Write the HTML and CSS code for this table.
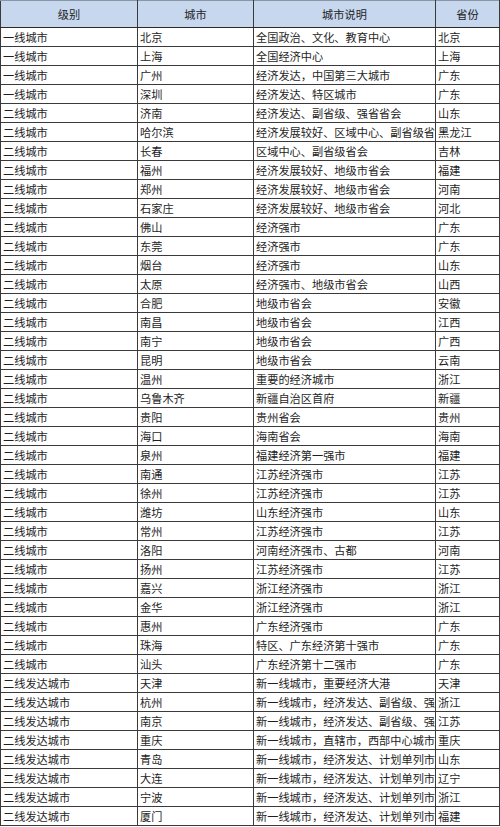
FILE: index.html
```html
<!DOCTYPE html>
<html lang="zh">
<head>
<meta charset="utf-8">
<link rel="stylesheet" href="styles.css">
</head>
<body>
<table class="sheet">
<colgroup><col class="c1"><col class="c2"><col class="c3"><col class="c4"></colgroup>
<thead>
<tr><th>级别</th><th>城市</th><th>城市说明</th><th>省份</th></tr>
</thead>
<tbody>
<tr><td>一线城市</td><td>北京</td><td><div class="clip">全国政治、文化、教育中心</div></td><td>北京</td></tr>
<tr><td>一线城市</td><td>上海</td><td><div class="clip">全国经济中心</div></td><td>上海</td></tr>
<tr><td>一线城市</td><td>广州</td><td><div class="clip">经济发达，中国第三大城市</div></td><td>广东</td></tr>
<tr><td>一线城市</td><td>深圳</td><td><div class="clip">经济发达、特区城市</div></td><td>广东</td></tr>
<tr><td>二线城市</td><td>济南</td><td><div class="clip">经济发达、副省级、强省省会</div></td><td>山东</td></tr>
<tr><td>二线城市</td><td>哈尔滨</td><td><div class="clip">经济发展较好、区域中心、副省级省会</div></td><td>黑龙江</td></tr>
<tr><td>二线城市</td><td>长春</td><td><div class="clip">区域中心、副省级省会</div></td><td>吉林</td></tr>
<tr><td>二线城市</td><td>福州</td><td><div class="clip">经济发展较好、地级市省会</div></td><td>福建</td></tr>
<tr><td>二线城市</td><td>郑州</td><td><div class="clip">经济发展较好、地级市省会</div></td><td>河南</td></tr>
<tr><td>二线城市</td><td>石家庄</td><td><div class="clip">经济发展较好、地级市省会</div></td><td>河北</td></tr>
<tr><td>二线城市</td><td>佛山</td><td><div class="clip">经济强市</div></td><td>广东</td></tr>
<tr><td>二线城市</td><td>东莞</td><td><div class="clip">经济强市</div></td><td>广东</td></tr>
<tr><td>二线城市</td><td>烟台</td><td><div class="clip">经济强市</div></td><td>山东</td></tr>
<tr><td>二线城市</td><td>太原</td><td><div class="clip">经济强市、地级市省会</div></td><td>山西</td></tr>
<tr><td>二线城市</td><td>合肥</td><td><div class="clip">地级市省会</div></td><td>安徽</td></tr>
<tr><td>二线城市</td><td>南昌</td><td><div class="clip">地级市省会</div></td><td>江西</td></tr>
<tr><td>二线城市</td><td>南宁</td><td><div class="clip">地级市省会</div></td><td>广西</td></tr>
<tr><td>二线城市</td><td>昆明</td><td><div class="clip">地级市省会</div></td><td>云南</td></tr>
<tr><td>二线城市</td><td>温州</td><td><div class="clip">重要的经济城市</div></td><td>浙江</td></tr>
<tr><td>二线城市</td><td>乌鲁木齐</td><td><div class="clip">新疆自治区首府</div></td><td>新疆</td></tr>
<tr><td>二线城市</td><td>贵阳</td><td><div class="clip">贵州省会</div></td><td>贵州</td></tr>
<tr><td>二线城市</td><td>海口</td><td><div class="clip">海南省会</div></td><td>海南</td></tr>
<tr><td>二线城市</td><td>泉州</td><td><div class="clip">福建经济第一强市</div></td><td>福建</td></tr>
<tr><td>二线城市</td><td>南通</td><td><div class="clip">江苏经济强市</div></td><td>江苏</td></tr>
<tr><td>二线城市</td><td>徐州</td><td><div class="clip">江苏经济强市</div></td><td>江苏</td></tr>
<tr><td>二线城市</td><td>潍坊</td><td><div class="clip">山东经济强市</div></td><td>山东</td></tr>
<tr><td>二线城市</td><td>常州</td><td><div class="clip">江苏经济强市</div></td><td>江苏</td></tr>
<tr><td>二线城市</td><td>洛阳</td><td><div class="clip">河南经济强市、古都</div></td><td>河南</td></tr>
<tr><td>二线城市</td><td>扬州</td><td><div class="clip">江苏经济强市</div></td><td>江苏</td></tr>
<tr><td>二线城市</td><td>嘉兴</td><td><div class="clip">浙江经济强市</div></td><td>浙江</td></tr>
<tr><td>二线城市</td><td>金华</td><td><div class="clip">浙江经济强市</div></td><td>浙江</td></tr>
<tr><td>二线城市</td><td>惠州</td><td><div class="clip">广东经济强市</div></td><td>广东</td></tr>
<tr><td>二线城市</td><td>珠海</td><td><div class="clip">特区、广东经济第十强市</div></td><td>广东</td></tr>
<tr><td>二线城市</td><td>汕头</td><td><div class="clip">广东经济第十二强市</div></td><td>广东</td></tr>
<tr><td>二线发达城市</td><td>天津</td><td><div class="clip">新一线城市，重要经济大港</div></td><td>天津</td></tr>
<tr><td>二线发达城市</td><td>杭州</td><td><div class="clip">新一线城市，经济发达、副省级、强省省会</div></td><td>浙江</td></tr>
<tr><td>二线发达城市</td><td>南京</td><td><div class="clip">新一线城市，经济发达、副省级、强省省会</div></td><td>江苏</td></tr>
<tr><td>二线发达城市</td><td>重庆</td><td><div class="clip">新一线城市，直辖市，西部中心城市</div></td><td>重庆</td></tr>
<tr><td>二线发达城市</td><td>青岛</td><td><div class="clip">新一线城市，经济发达、计划单列市</div></td><td>山东</td></tr>
<tr><td>二线发达城市</td><td>大连</td><td><div class="clip">新一线城市，经济发达、计划单列市</div></td><td>辽宁</td></tr>
<tr><td>二线发达城市</td><td>宁波</td><td><div class="clip">新一线城市，经济发达、计划单列市</div></td><td>浙江</td></tr>
<tr><td>二线发达城市</td><td>厦门</td><td><div class="clip">新一线城市，经济发达、计划单列市</div></td><td>福建</td></tr>
</tbody>
</table>
</body>
</html>
```
FILE: styles.css
```css
html, body {
  margin: 0;
  padding: 0;
  background: #ffffff;
}
body {
  font-family: "Noto Sans CJK SC", "Noto Sans", sans-serif;
  font-size: 11.2px;
  color: #1e1e1e;
}
.sheet {
  table-layout: fixed;
  border-collapse: collapse;
  width: 499px;
  margin: 0;
}
.c1 { width: 137px; }
.c2 { width: 116px; }
.c3 { width: 182px; }
.c4 { width: 64px; }
.sheet th,
.sheet td {
  border: 1px solid #3a3a3a;
  padding: 0 0 0 2px;
  white-space: nowrap;
  overflow: hidden;
  line-height: 17px;
  height: 18px;
  text-align: left;
  vertical-align: middle;
  font-weight: normal;
}
.sheet th {
  height: 26px;
  background: #c6d7ee;
  text-align: center;
  padding: 0;
  border-color: #8a96a6 #3a3a3a #2a2a2a #3a3a3a;
}
.clip {
  overflow: hidden;
  white-space: nowrap;
  width: 100%;
}
```
